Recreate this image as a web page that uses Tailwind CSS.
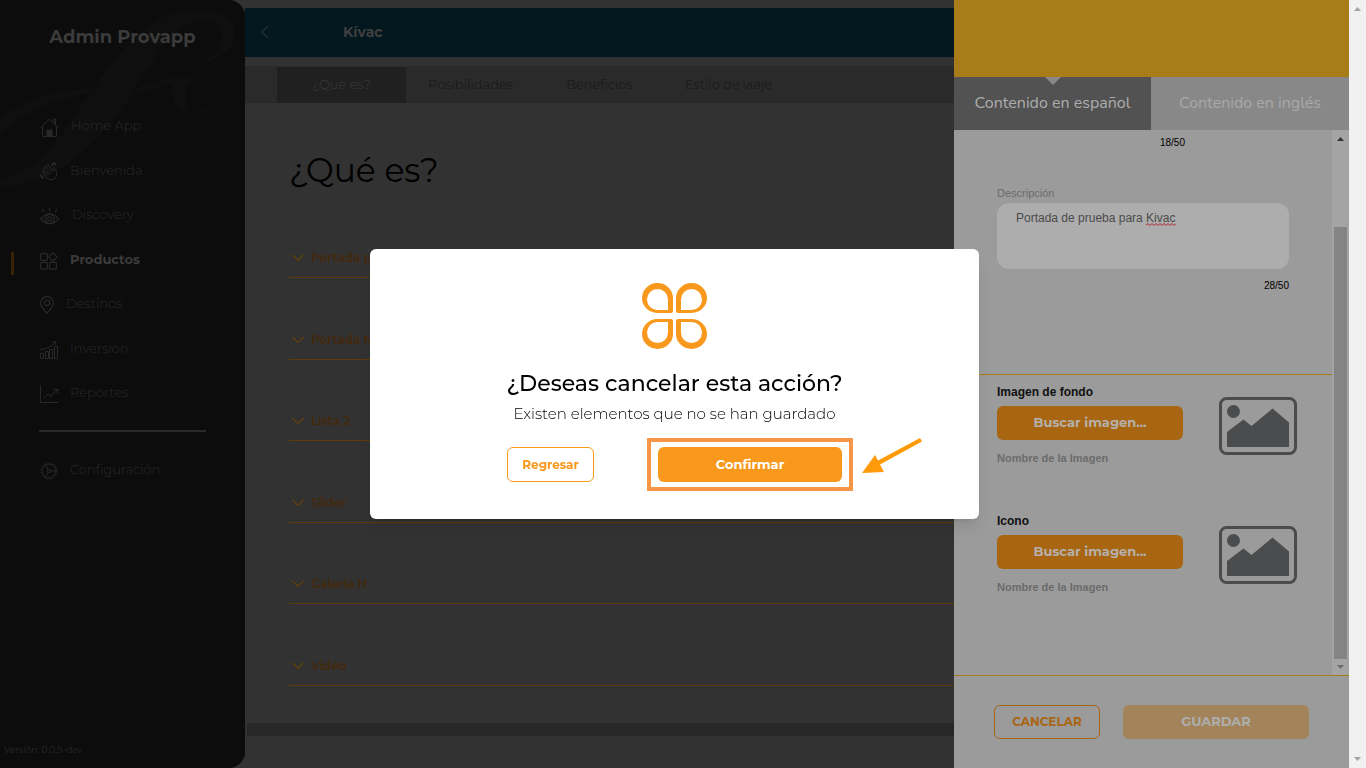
<!DOCTYPE html>
<html lang="es">

<head>
    <meta charset="UTF-8">
    <meta name="viewport" content="width=device-width, initial-scale=1.0">
    <title>Admin Provapp</title>
    <script src="https://cdn.jsdelivr.net/npm/@tailwindcss/browser@4"></script>
</head>

<body class="font-['Montserrat','Inter',sans-serif] bg-[#323232] overflow-hidden">
    <div class="flex h-screen">

        <!-- Sidebar -->
        <aside class="relative w-[245px] shrink-0 bg-[#0c0c0c] rounded-r-2xl overflow-hidden flex flex-col text-[#292929]">
            <svg class="absolute top-0 left-0 w-[245px] h-[190px]" viewBox="0 0 245 190" fill="#0f0f0f">
                <path d="M0 180C30 174 50 150 72 120C100 80 125 35 165 16C190 7 215 10 230 19C242 32 232 60 200 64C222 52 228 34 216 22C190 10 165 40 140 80C115 125 80 160 50 175C30 184 12 187 0 185Z" />
                <path d="M0 118C25 98 60 90 100 87L96 92C60 97 25 110 0 134ZM140 88C160 78 175 75 198 77C185 84 182 98 188 110C195 116 205 112 212 100C212 112 200 116 190 113C175 108 170 98 173 84C160 87 150 91 134 94Z" />
            </svg>
            <h1 class="relative mt-[25px] text-center text-lg leading-6 font-bold text-[#3b3b3b]">Admin Provapp</h1>

            <nav class="relative mt-[55px] h-[311px] flex flex-col justify-between text-[13px] font-light">
                <a href="#" class="h-11 pl-10 flex items-center gap-3">
                    <svg class="w-[19px] h-[19px] mt-[2px]" viewBox="0 0 19 19" fill="none" stroke="currentColor">
                        <path d="M.5 10L9.500 1L18.500 10M2.500 8.500V18.500H16.500V8.500M14 5.500V1H15.500V7" />
                        <path d="M7 12H12V18.500H7Z" fill="currentColor" />
                    </svg>
                    Home App
                </a>
                <a href="#" class="h-11 pl-10 flex items-center gap-3">
                    <svg class="w-[18px] h-[19px] mt-[2px]" viewBox="0 0 18 19" fill="none" stroke="currentColor" stroke-linecap="round">
                        <path d="M6.500 15.800L2.800 11.200Q2.500 9.800 4.200 10.200L3 8Q3 6.600 4.500 7L4.200 5Q5 3.800 6.200 4.800L6.500 3Q7.800 2 9 3.500L13.200 9L13 6.500Q13.800 4.800 15 6.500L16.800 11Q17.300 15 13.800 17.300Q9.500 19 6.500 15.800ZM4.200 10.200L7.200 13.500M4.500 7L9 12M6.200 4.800L11 10.200" />
                        <path d="M12 2L13 3.200M14 .8L15.500 2.500M.8 13.500L3 16" stroke-width="1.800" />
                    </svg>
                    Bienvenida
                </a>
                <a href="#" class="h-11 pl-10 flex items-center gap-3">
                    <svg class="w-[20px] h-[18px] mt-[2px]" viewBox="0 0 20 18" fill="none" stroke="currentColor" stroke-width="1.200">
                        <path d="M.6 12Q9.500 1.500 18.600 12Q9.500 21.500.6 12Z" />
                        <circle cx="9.600" cy="11.800" r="4.500" />
                        <circle cx="9.600" cy="11.800" r="2" />
                        <path d="M9.600.5V4.500M2 2L4 5M17 2L15.200 5" />
                    </svg>
                    Discovery
                </a>
                <a href="#" class="relative h-11 pl-10 flex items-center gap-3 font-bold text-[#3b3b3b]">
                    <span class="absolute left-[11px] top-[14px] w-[3px] h-[23px] bg-[#3a2205]"></span>
                    <svg class="w-[18px] h-[18px] mt-[2px]" viewBox="0 0 18 18" fill="none" stroke="#292929" stroke-width="1.200">
                        <rect x=".6" y="1.600" width="6.800" height="6.800" rx="1" />
                        <rect x=".6" y="10.400" width="6.800" height="6.800" rx="1" />
                        <rect x="9.600" y="10.400" width="6.800" height="6.800" rx="1" />
                        <path d="M13 .6L17.200 4.800L13 9L8.800 4.800Z" stroke-linejoin="round" />
                    </svg>
                    Productos
                </a>
                <a href="#" class="h-11 pl-10 flex items-center gap-3">
                    <svg class="w-[14px] h-[18px] mt-[2px]" viewBox="0 0 14 18" fill="none" stroke="currentColor" stroke-width="1.200">
                        <path d="M7 17.200Q.6 11 .6 7A6.400 6.400 0 0 1 13.400 7Q13.400 11 7 17.200Z" />
                        <circle cx="7" cy="6.800" r="2.800" />
                    </svg>
                    Destinos
                </a>
                <a href="#" class="h-11 pl-10 flex items-center gap-3">
                    <svg class="w-[18px] h-[18px] mt-[2px]" viewBox="0 0 18 18" fill="none" stroke="currentColor">
                        <path d="M.5 17.500V12.500H3.500V17.500ZM5.500 17.500V10.500H8.500V17.500ZM9.500 17.500V8.500H12.500V17.500ZM14.500 17.500V5.500H17.500V17.500ZM0 8.500Q8 9 15.500 1M12.500.8H15.800V4" />
                    </svg>
                    Inversión
                </a>
                <a href="#" class="h-11 pl-10 flex items-center gap-3">
                    <svg class="w-[18px] h-[18px] mt-[2px]" viewBox="0 0 18 18" fill="none" stroke="currentColor">
                        <path d="M.5 0V17.500H18M3.500 13.500L8 9L10.500 11.500L17 5M13.500 4.500H17.500V8.500" />
                    </svg>
                    Reportes
                </a>
            </nav>
            <hr class="relative mt-[15px] ml-[39px] mr-[39px] border-t-2 border-[#292929]">
            <a href="#" class="relative mt-4 h-11 pl-10 flex items-center gap-3 text-[13px] font-light">
                <svg class="w-[18px] h-[18px] mt-[2px]" viewBox="0 0 18 18" fill="none" stroke="currentColor">
                    <circle cx="9" cy="9" r="7" />
                    <circle cx="9" cy="9" r="8" stroke-dasharray="1.600 1.600" />
                    <circle cx="9" cy="9" r="1.600" />
                    <path d="M10.600 9H16M8.200 7.600L5.500 3M8.200 10.400L5.500 15" />
                </svg>
                Configuración
            </a>
            <p class="mt-auto mb-3 pl-1 text-[9px] leading-3">Versión: 0.0.9-dev</p>
        </aside>

        <!-- Main content -->
        <main class="flex-1 min-w-0 flex flex-col pt-2">
            <header class="h-[49px] shrink-0 bg-[#03171e] flex items-center pl-4 pb-[2px] text-[#3f3f3f]">
                <button type="button" aria-label="Volver">
                    <svg class="w-2 h-[14px]" viewBox="0 0 8 14" fill="none" stroke="currentColor">
                        <path d="M7.500.5L.8 7L7.500 13.500" />
                    </svg>
                </button>
                <h2 class="ml-[74px] text-sm font-bold">Kívac</h2>
            </header>
            <div class="mt-[9px] h-[37px] shrink-0 bg-[#2a2a2a] pl-8 pt-px flex text-[13px] font-light text-[#151515]">
                <button type="button" class="w-[129px] bg-[#202020] text-[#3a3a3a]">¿Qué es?</button>
                <button type="button" class="w-[129px]">Posibilidades</button>
                <button type="button" class="w-[129px]">Beneficios</button>
                <button type="button" class="w-[129px]">Estilo de viaje</button>
            </div>
            <h2 class="mt-[47px] ml-11 text-[33px] leading-10 text-black">¿Qué es?</h2>
            <div class="mt-[49px] ml-11 mb-[37px] flex-1 flex flex-col justify-between text-xs font-semibold text-[#44280b]">
                <button type="button" class="h-[39px] pl-[3px] border-b border-[#5f3b08] flex items-center gap-[7px]">
                    <svg class="w-3 h-2" viewBox="0 0 12 8" fill="none" stroke="#64400c" stroke-width="1.200"><path d="M.5 1L6 6.500L11.500 1" /></svg>
                    Portada principal
                </button>
                <button type="button" class="h-[39px] pl-[3px] border-b border-[#5f3b08] flex items-center gap-[7px]">
                    <svg class="w-3 h-2" viewBox="0 0 12 8" fill="none" stroke="#64400c" stroke-width="1.200"><path d="M.5 1L6 6.500L11.500 1" /></svg>
                    Portada Móvil
                </button>
                <button type="button" class="h-[39px] pl-[3px] border-b border-[#5f3b08] flex items-center gap-[7px]">
                    <svg class="w-3 h-2" viewBox="0 0 12 8" fill="none" stroke="#64400c" stroke-width="1.200"><path d="M.5 1L6 6.500L11.500 1" /></svg>
                    Lista 2
                </button>
                <button type="button" class="h-[39px] pl-[3px] border-b border-[#5f3b08] flex items-center gap-[7px]">
                    <svg class="w-3 h-2" viewBox="0 0 12 8" fill="none" stroke="#64400c" stroke-width="1.200"><path d="M.5 1L6 6.500L11.500 1" /></svg>
                    Slider
                </button>
                <button type="button" class="h-[39px] pl-[3px] border-b border-[#5f3b08] flex items-center gap-[7px]">
                    <svg class="w-3 h-2" viewBox="0 0 12 8" fill="none" stroke="#64400c" stroke-width="1.200"><path d="M.5 1L6 6.500L11.500 1" /></svg>
                    Galería H
                </button>
                <button type="button" class="h-[39px] pl-[3px] border-b border-[#5f3b08] flex items-center gap-[7px]">
                    <svg class="w-3 h-2" viewBox="0 0 12 8" fill="none" stroke="#64400c" stroke-width="1.200"><path d="M.5 1L6 6.500L11.500 1" /></svg>
                    Video
                </button>
            </div>
            <div class="ml-[2px] mb-8 h-[13px] shrink-0 bg-[#282828]"></div>
        </main>

        <!-- Edit panel -->
        <section class="w-[395px] shrink-0 bg-[#9b9b9b] flex flex-col">
            <div class="h-[77px] shrink-0 bg-[#a87c18]"></div>
            <div class="h-[53px] shrink-0 flex font-['Nunito','Open_Sans',sans-serif] text-base">
                <button type="button" class="relative w-[197px] pb-[2px] bg-[#525252] text-[#adadad]">
                    <svg class="absolute top-0 left-1/2 -translate-x-1/2 w-4 h-2" viewBox="0 0 16 8" fill="#888888"><path d="M0 0H16L8 8Z" /></svg>
                    Contenido en español
                </button>
                <button type="button" class="flex-1 pb-[2px] bg-[#888888] text-[#a9a9a9]">Contenido en inglés</button>
            </div>
            <div class="flex-1 min-h-0 flex font-['Liberation_Sans',sans-serif]">
                <div class="flex-1 pt-[7px]">
                    <div class="pl-[43px] pr-[43px]">
                        <p class="w-[188px] text-right text-[10px] leading-3 text-black">18/50</p>
                        <label for="descripcion" class="block mt-[38px] text-[11px] leading-3 text-[#6b6b6b]">Descripción</label>
                        <div class="relative mt-1">
                            <textarea id="descripcion" spellcheck="false"
                                class="block w-full h-[66px] rounded-xl bg-[#adadad] px-[19px] py-[7px] text-[12px] leading-4 text-[#4b4b4b] resize-none outline-none">Portada de prueba para Kivac</textarea>
                            <svg class="absolute left-[149px] top-5 w-[30px] h-[3px]" viewBox="0 0 30 3" fill="none" stroke="#b3202a">
                                <path d="M0 2L2 .5L4 2.500L6 .5L8 2.500L10 .5L12 2.500L14 .5L16 2.500L18 .5L20 2.500L22 .5L24 2.500L26 .5L28 2.500L30 .5" />
                            </svg>
                        </div>
                        <p class="mt-[11px] text-right text-[10px] leading-3 text-black">28/50</p>
                    </div>
                    <div class="mt-[82px] border-t border-[#a87c18] pl-[43px] pr-[35px] pt-[9px] flex flex-col gap-[49px]">
                        <div class="flex items-center justify-between">
                            <div class="flex flex-col">
                                <h3 class="text-xs leading-4 font-bold text-[#101010]">Imagen de fondo</h3>
                                <button type="button" class="mt-[6px] w-[186px] h-[34px] rounded-md bg-[#a86512] text-[#b5b0aa] text-[13px] font-bold font-['Montserrat','Inter',sans-serif]">Buscar imagen...</button>
                                <p class="mt-3 text-[11px] leading-3 font-bold text-[#6b6b6b]">Nombre de la Imagen</p>
                            </div>
                            <svg class="mt-1 w-[78px] h-[58px]" viewBox="0 0 78 58" fill="#4b4c4d">
                                <rect x="1.500" y="1.500" width="75" height="55" rx="6" fill="none" stroke="#4b4c4d" stroke-width="3" />
                                <circle cx="14.500" cy="14.500" r="6.500" />
                                <path d="M8 50V35L24.500 22.500L32.500 29L53.500 11.500L70 25.500V50Z" />
                            </svg>
                        </div>
                        <div class="flex items-center justify-between">
                            <div class="flex flex-col">
                                <h3 class="text-xs leading-4 font-bold text-[#101010]">Icono</h3>
                                <button type="button" class="mt-[6px] w-[186px] h-[34px] rounded-md bg-[#a86512] text-[#b5b0aa] text-[13px] font-bold font-['Montserrat','Inter',sans-serif]">Buscar imagen...</button>
                                <p class="mt-3 text-[11px] leading-3 font-bold text-[#6b6b6b]">Nombre de la Imagen</p>
                            </div>
                            <svg class="mt-1 w-[78px] h-[58px]" viewBox="0 0 78 58" fill="#4b4c4d">
                                <rect x="1.500" y="1.500" width="75" height="55" rx="6" fill="none" stroke="#4b4c4d" stroke-width="3" />
                                <circle cx="14.500" cy="14.500" r="6.500" />
                                <path d="M8 50V35L24.500 22.500L32.500 29L53.500 11.500L70 25.500V50Z" />
                            </svg>
                        </div>
                    </div>
                </div>
                <div class="w-[17px] bg-[#a4a4a4] flex flex-col items-center">
                    <svg class="mt-[7px] w-[7px] h-1" viewBox="0 0 7 4" fill="#343434"><path d="M0 4H7L3.500 0Z" /></svg>
                    <div class="mt-[86px] w-[13px] flex-1 bg-[#848484]"></div>
                    <svg class="my-[6px] w-[7px] h-1" viewBox="0 0 7 4" fill="#6b6b6b"><path d="M0 0H7L3.500 4Z" /></svg>
                </div>
            </div>
            <div class="h-[93px] shrink-0 border-t border-[#a87c18] pl-10 pr-10 pt-[29px] flex items-start gap-[23px] text-[13px] font-bold">
                <button type="button" class="w-[106px] h-[34px] rounded-md border border-[#a86512] text-xs text-[#a86512]">CANCELAR</button>
                <button type="button" class="flex-1 h-[34px] rounded-md bg-[#a3845a] text-[#adadad]">GUARDAR</button>
            </div>
        </section>

        <!-- Page scrollbar -->
        <div class="w-[17px] shrink-0 bg-[#f1f1f1] flex flex-col items-center justify-between py-[7px]">
            <svg class="w-[7px] h-1" viewBox="0 0 7 4" fill="#a3a3a3"><path d="M0 4H7L3.500 0Z" /></svg>
            <svg class="w-[7px] h-1" viewBox="0 0 7 4" fill="#a3a3a3"><path d="M0 0H7L3.500 4Z" /></svg>
        </div>
    </div>

    <!-- Confirm dialog -->
    <div class="fixed inset-0 pr-[17px] flex items-center justify-center">
        <div role="dialog" aria-labelledby="dialogTitle" class="w-[609px] bg-white rounded-md shadow-lg pt-[34px] pb-[37px] flex flex-col items-center">
            <svg class="w-[65px] h-[66px]" viewBox="0 0 65 66" fill="#f8981d" fill-rule="evenodd">
                <defs>
                    <path id="petal" d="M15.500 0A15.500 15 0 0 1 31 15V28Q31 30 29 30H15.500A15.500 15 0 0 1 15.500 0ZM15.500 6A10.500 10.500 0 0 0 15.500 27H26V16.500A10.500 10.500 0 0 0 15.500 6Z" />
                </defs>
                <use href="#petal" />
                <use href="#petal" transform="translate(65 0) scale(-1 1)" />
                <use href="#petal" transform="translate(0 66) scale(1 -1)" />
                <use href="#petal" transform="translate(65 66) scale(-1 -1)" />
            </svg>
            <h2 id="dialogTitle" class="mt-[21px] text-[22px] leading-7 font-medium text-black">¿Deseas cancelar esta acción?</h2>
            <p class="mt-1 text-[15px] leading-6 font-light text-black">Existen elementos que no se han guardado</p>
            <div class="mt-[21px] w-[335px] flex justify-between text-[13px] font-bold">
                <button type="button" class="w-[87px] h-[35px] rounded-md border border-[#f8981d] text-xs text-[#f8981d]">Regresar</button>
                <div class="relative">
                    <button type="button" class="w-[184px] h-[35px] rounded-md bg-[#f8981d] text-white">Confirmar</button>
                    <div class="absolute -inset-x-[11px] -inset-y-[9px] border-4 border-[#f79646]"></div>
                    <svg class="absolute left-[204px] -top-[9px] w-[60px] h-9" viewBox="0 0 60 36" fill="#ff9b0a">
                        <path d="M0 35L13 17L16 22.500L58 0L60 3.500L18 26.500L22 34Z" />
                    </svg>
                </div>
            </div>
        </div>
    </div>
</body>

</html>
